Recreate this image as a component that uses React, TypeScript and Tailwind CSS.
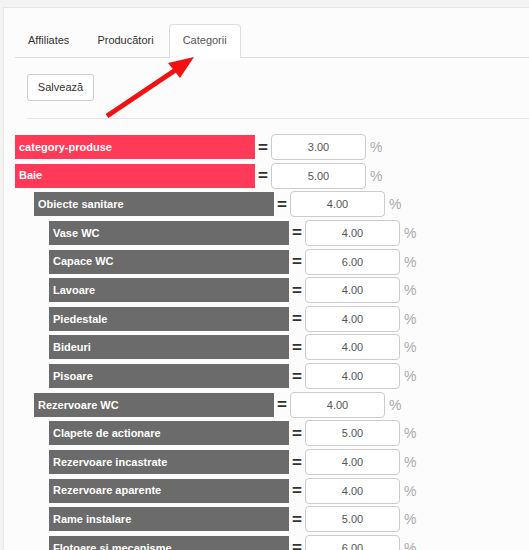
import React from "react"

type Row = { name: string; value: string; level: 0 | 1 | 2 }

const rows: Row[] = [
  { name: "category-produse", value: "3.00", level: 0 },
  { name: "Baie", value: "5.00", level: 0 },
  { name: "Obiecte sanitare", value: "4.00", level: 1 },
  { name: "Vase WC", value: "4.00", level: 2 },
  { name: "Capace WC", value: "6.00", level: 2 },
  { name: "Lavoare", value: "4.00", level: 2 },
  { name: "Piedestale", value: "4.00", level: 2 },
  { name: "Bideuri", value: "4.00", level: 2 },
  { name: "Pisoare", value: "4.00", level: 2 },
  { name: "Rezervoare WC", value: "4.00", level: 1 },
  { name: "Clapete de actionare", value: "5.00", level: 2 },
  { name: "Rezervoare incastrate", value: "4.00", level: 2 },
  { name: "Rezervoare aparente", value: "4.00", level: 2 },
  { name: "Rame instalare", value: "5.00", level: 2 },
  { name: "Flotoare si mecanisme", value: "6.00", level: 2 },
]

const indent = {
  0: "ml-0",
  1: "ml-[19px]",
  2: "ml-[34px]",
}

function CategoryRow({ row }: { row: Row }) {
  return (
    <div className={`flex h-[26px] items-center mb-[2.65px] ${indent[row.level]}`}>
      <div
        className={`flex h-[24px] w-[240px] items-center pl-[4px] text-[11px] font-bold text-white ${
          row.level === 0 ? "bg-[#ff3a58]" : "bg-[#6b6b6b]"
        }`}
      >
        {row.name}
      </div>
      <span className="w-[16px] text-center text-[17px] font-bold leading-none text-[#333]">=</span>
      <input
        type="text"
        defaultValue={row.value}
        className="h-[26px] w-[95px] rounded-[4px] border border-[#ccc] bg-white text-center text-[11px] text-[#555] outline-none"
      />
      <span className="ml-[4px] text-[14px] leading-none text-[#aaa]">%</span>
    </div>
  )
}

export default function App() {
  return (
    <div
      className="relative min-h-[550px] overflow-hidden bg-[#f3f3f3] pt-[7px] pl-[3px]"
      style={{ fontFamily: '"Liberation Sans", Arial, sans-serif' }}
    >
      <div className="min-h-[560px] border-t border-l border-[#e6e6e6] bg-[#fcfcfc] pl-[11px] pt-[16px]">
        {/* tabs */}
        <div className="flex items-start border-b border-[#ddd] text-[11px]">
          <div className="mr-[2px] px-[13px] py-[10px] leading-[13px] text-[#333]">Affiliates</div>
          <div className="mr-[2px] px-[13px] py-[10px] leading-[13px] text-[#333]">Producători</div>
          <div className="-mb-px rounded-t-[4px] border border-b-transparent border-[#ddd] bg-white px-[13px] pt-[9px] pb-[10px] leading-[13px] text-[#555]">
            Categorii
          </div>
        </div>

        <div className="pl-[12px] pt-[16px]">
          <button className="block h-[27px] w-[67px] rounded-[3px] border border-[#ccc] bg-white text-[11px] text-[#333]">
            Salvează
          </button>
          <div className="mt-[17px] border-t border-[#e5e5e5]" />
        </div>

        <div className="pt-[15px]">
          {rows.map((row) => (
            <CategoryRow key={row.name} row={row} />
          ))}
        </div>
      </div>

      <svg
        className="pointer-events-none absolute left-0 top-0"
        width="529"
        height="130"
        viewBox="0 0 529 130"
      >
        <line x1="107" y1="116" x2="177" y2="69" stroke="#f21111" strokeWidth="5" />
        <polygon points="194,57 168,63 180,78" fill="#f21111" />
      </svg>
    </div>
  )
}
